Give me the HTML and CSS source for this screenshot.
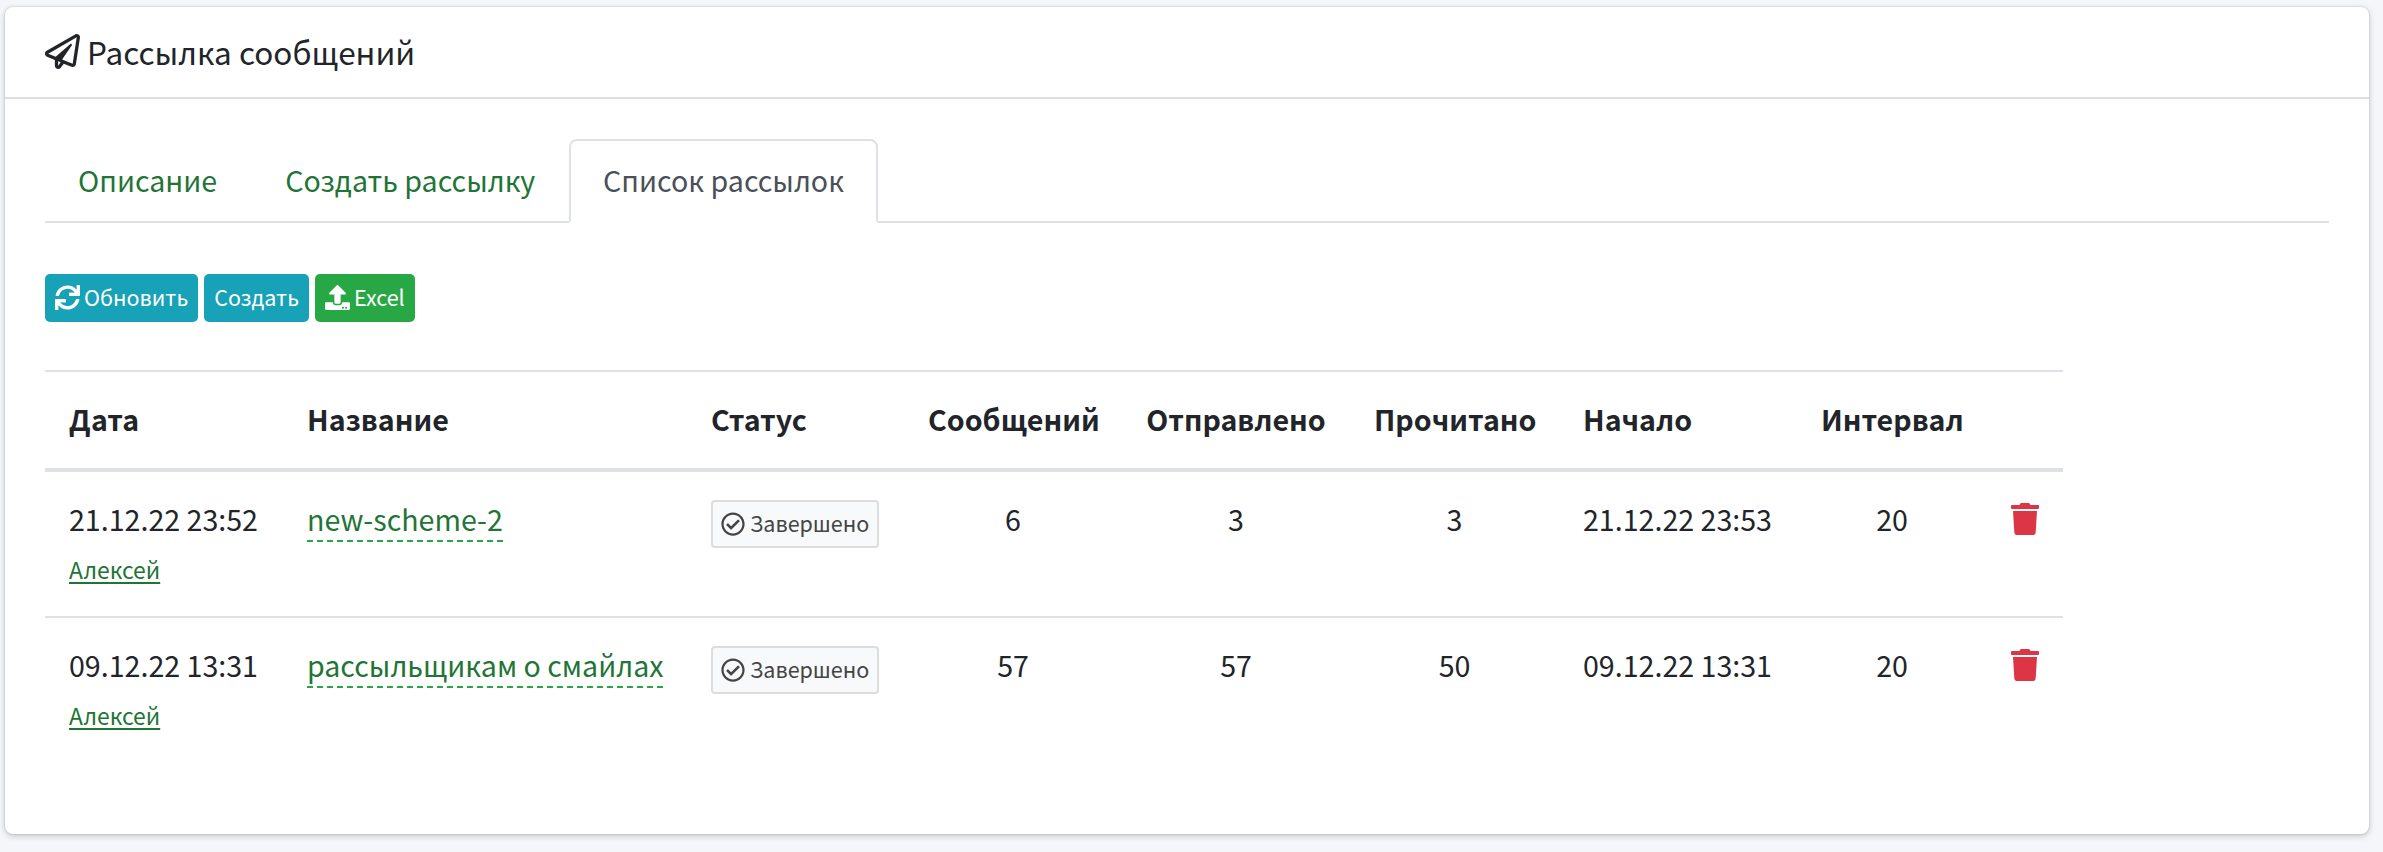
FILE: index.html
```
<!DOCTYPE html>
<html lang="ru">
<head>
    <meta charset="UTF-8">
    <meta name="viewport" content="width=device-width, initial-scale=1.0">
    <title>Рассылка сообщений</title>
    <link rel="stylesheet" href="styles.css">
</head>
<body>
    <!-- Shared icons -->
    <svg class="sprite">
        <symbol id="check" viewBox="0 0 512 512"><path fill="currentColor" d="M256 8C119.033 8 8 119.033 8 256s111.033 248 248 248 248-111.033 248-248S392.967 8 256 8zm0 48c110.532 0 200 89.451 200 200 0 110.532-89.451 200-200 200-110.532 0-200-89.451-200-200 0-110.532 89.451-200 200-200m140.204 130.267l-22.536-22.718c-4.667-4.705-12.265-4.736-16.970-.068L215.346 303.697l-59.792-60.277c-4.667-4.705-12.265-4.736-16.970-.069l-22.719 22.536c-4.705 4.667-4.736 12.265-.068 16.971l90.781 91.516c4.667 4.705 12.265 4.736 16.970.068l172.589-171.204c4.704-4.668 4.734-12.266.067-16.971z"/></symbol>
        <symbol id="trash" viewBox="0 0 448 512"><path fill="currentColor" d="M432 32H312l-9.400-18.700A24 24 0 0 0 281.100 0H166.800a23.720 23.720 0 0 0-21.400 13.300L136 32H16A16 16 0 0 0 0 48v32a16 16 0 0 0 16 16h416a16 16 0 0 0 16-16V48a16 16 0 0 0-16-16zM32 128l21.200 339a48 48 0 0 0 47.900 45h245.800a48 48 0 0 0 47.900-45L416 128z"/></symbol>
    </svg>

    <div class="card">
        <div class="card-header">
            <svg class="icon-plane" viewBox="0 0 512 512"><path fill="currentColor" d="M440 6.500L24 246.400c-34.400 19.900-31.100 70.800 5.700 85.900L144 379.600V464c0 46.400 59.200 65.500 86.600 28.600l43.800-59.100 111.900 46.200c5.900 2.400 12.100 3.600 18.300 3.600 8.200 0 16.300-2.100 23.600-6.200 12.800-7.200 21.600-20 23.900-34.500l59.400-387.200c6.100-40.100-36.900-68.800-71.500-48.900zM192 464v-64.600l36.600 15.100L192 464zm212.600-28.700l-153.800-63.500L391 169.500c10.700-15.500-9.500-33.500-23.700-21.200L155.800 332.600 48 288 464 48l-59.400 387.300z"/></svg>
            <h3 class="card-title">Рассылка сообщений</h3>
        </div>

        <div class="card-body">
            <ul class="nav-tabs">
                <li class="nav-link">Описание</li>
                <li class="nav-link">Создать рассылку</li>
                <li class="nav-link active">Список рассылок</li>
            </ul>

            <div class="buttons">
                <button class="btn btn-info">
                    <svg class="icon-btn" viewBox="0 0 512 512"><path fill="currentColor" d="M440.650 12.570l4 82.770A247.160 247.160 0 0 0 255.830 8C134.730 8 33.910 94.920 12.290 209.820A12 12 0 0 0 24.090 224h49.050a12 12 0 0 0 11.670-9.260 175.910 175.910 0 0 1 317-56.940l-101.460-4.860a12 12 0 0 0-12.570 12v47.410a12 12 0 0 0 12 12H500a12 12 0 0 0 12-12V12a12 12 0 0 0-12-12h-47.370a12 12 0 0 0-11.980 12.570zM255.830 432a175.610 175.610 0 0 1-146-77.800l101.800 4.870a12 12 0 0 0 12.570-12v-47.400a12 12 0 0 0-12-12H12a12 12 0 0 0-12 12V500a12 12 0 0 0 12 12h47.350a12 12 0 0 0 12-12.600l-4.150-82.570A247.170 247.170 0 0 0 255.830 504c121.110 0 221.930-86.920 243.550-201.820a12 12 0 0 0-11.800-14.180h-49.050a12 12 0 0 0-11.670 9.260A175.860 175.860 0 0 1 255.830 432z"/></svg>
                    <span>Обновить</span>
                </button>
                <button class="btn btn-info"><span>Создать</span></button>
                <button class="btn btn-success">
                    <svg class="icon-btn" viewBox="0 0 512 512"><path fill="currentColor" d="M296 384h-80c-13.300 0-24-10.700-24-24V192h-87.700c-17.800 0-26.700-21.500-14.100-34.100L242.300 5.700c7.500-7.500 19.800-7.500 27.300 0l152.200 152.200c12.600 12.600 3.700 34.100-14.100 34.100H320v168c0 13.300-10.700 24-24 24zm216-8v112c0 13.300-10.700 24-24 24H24c-13.300 0-24-10.700-24-24V376c0-13.300 10.700-24 24-24h136v8c0 30.900 25.100 56 56 56h80c30.900 0 56-25.100 56-56v-8h136c13.300 0 24 10.700 24 24zm-124 88c0-11-9-20-20-20s-20 9-20 20 9 20 20 20 20-9 20-20zm64 0c0-11-9-20-20-20s-20 9-20 20 9 20 20 20 20-9 20-20z"/></svg>
                    <span>Excel</span>
                </button>
            </div>

            <table class="table">
                <colgroup>
                    <col class="col-date">
                    <col class="col-name">
                    <col class="col-status">
                    <col class="col-total">
                    <col class="col-sent">
                    <col class="col-read">
                    <col class="col-start">
                    <col class="col-interval">
                    <col class="col-delete">
                </colgroup>
                <thead>
                    <tr>
                        <th>Дата</th>
                        <th>Название</th>
                        <th>Статус</th>
                        <th class="center">Сообщений</th>
                        <th class="center">Отправлено</th>
                        <th class="center">Прочитано</th>
                        <th>Начало</th>
                        <th class="center">Интервал</th>
                        <th></th>
                    </tr>
                </thead>
                <tbody>
                    <tr>
                        <td>21.12.22 23:52<br><a class="author">Алексей</a></td>
                        <td><a class="name">new-scheme-2</a></td>
                        <td><div class="status"><svg class="icon-check"><use href="#check"/></svg><span>Завершено</span></div></td>
                        <td class="center">6</td>
                        <td class="center">3</td>
                        <td class="center">3</td>
                        <td>21.12.22 23:53</td>
                        <td class="center">20</td>
                        <td><svg class="icon-trash"><use href="#trash"/></svg></td>
                    </tr>
                    <tr>
                        <td>09.12.22 13:31<br><a class="author">Алексей</a></td>
                        <td><a class="name">рассыльщикам о смайлах</a></td>
                        <td><div class="status"><svg class="icon-check"><use href="#check"/></svg><span>Завершено</span></div></td>
                        <td class="center">57</td>
                        <td class="center">57</td>
                        <td class="center">50</td>
                        <td>09.12.22 13:31</td>
                        <td class="center">20</td>
                        <td><svg class="icon-trash"><use href="#trash"/></svg></td>
                    </tr>
                </tbody>
            </table>
        </div>
    </div>
</body>
</html>
```
FILE: styles.css
```
* {
    box-sizing: border-box;
}

body {
    margin: 0;
    height: 852px;
    padding: 7px 14px 18px 5px;
    overflow: hidden;
    background-color: #f4f6f9;
    color: #212529;
    font-family: "Noto Sans CJK SC", "Noto Sans", sans-serif;
    font-size: 28.6px;
    line-height: 48px;
}

.sprite {
    display: none;
}

svg {
    display: block;
    flex: none;
}

.card {
    height: 827px;
    background-color: #fff;
    border-radius: 8px;
    box-shadow: 0 0 2px rgba(0, 0, 0, 0.2), 0 2px 6px rgba(0, 0, 0, 0.2);
}

.card-header {
    display: flex;
    align-items: center;
    gap: 7px;
    height: 92px;
    padding: 0 40px 1px;
    border-bottom: 2px solid #dfdfdf;
}

.card-title {
    margin: 0;
    padding-bottom: 2px;
    font-size: 31.5px;
    font-weight: 400;
}

.icon-plane {
    width: 35px;
    height: 35px;
}

.card-body {
    padding: 40px;
}

/* Tabs */
.nav-tabs {
    display: flex;
    height: 84px;
    margin: 0;
    padding: 0;
    list-style: none;
    border-bottom: 2px solid #dee2e6;
}

.nav-link {
    height: 84px;
    padding: 15px 32px;
    border: 2px solid transparent;
    border-radius: 8px 8px 0 0;
    color: #1e7536;
}

.nav-link:first-child {
    padding-left: 31px;
}

.nav-link.active {
    color: #495057;
    background-color: #fff;
    border-color: #dee2e6 #dee2e6 #fff;
}

/* Buttons */
.buttons {
    display: flex;
    gap: 6px;
    margin: 51px 0 48px;
}

.btn {
    display: flex;
    align-items: center;
    gap: 4px;
    height: 48px;
    padding: 0 10px;
    border: none;
    border-radius: 5px;
    color: #fff;
    font-family: inherit;
    font-size: 21.5px;
    line-height: 44px;
}

.btn span,
.status span {
    padding-bottom: 2px;
}

.btn-info {
    background-color: #17a2b8;
}

.btn-success {
    background-color: #28a745;
}

.icon-btn {
    width: 25px;
    height: 25px;
    margin-bottom: 1px;
}

/* Table */
.table {
    width: 2018px;
    table-layout: fixed;
    border-spacing: 0;
}

.table th,
.table td {
    height: 144px;
    padding: 23px 24px 25px;
    text-align: left;
    vertical-align: top;
    white-space: nowrap;
}

.table th {
    height: 102px;
    border-top: 2px solid #dee2e6;
    border-bottom: 4px solid #dee2e6;
}

.table tr + tr td {
    border-top: 2px solid #dee2e6;
}

.table .center {
    text-align: center;
}

.col-date { width: 238px; }
.col-name { width: 404px; }
.col-status { width: 217px; }
.col-total { width: 218px; }
.col-sent { width: 228px; }
.col-read { width: 209px; }
.col-start { width: 238px; }
.col-interval { width: 190px; }
.col-delete { width: 76px; }

/* inline-block with a fixed line keeps the row height exact */
.author {
    display: inline-block;
    height: 48px;
    padding-top: 2px;
    vertical-align: top;
    color: #1e7536;
    font-size: 22.9px;
    text-decoration: underline;
    text-decoration-thickness: 2px;
    text-underline-offset: 3px;
}

.name {
    display: inline-block;
    height: 47px;
    color: #1e7536;
    border-bottom: 2px dashed #28a745;
}

.status {
    display: flex;
    align-items: center;
    gap: 5px;
    width: 168px;
    height: 48px;
    margin-top: 5px;
    padding: 0 8px;
    border: 2px solid #ddd;
    border-radius: 4px;
    background-color: #f8f9fa;
    color: #444;
    font-size: 21.5px;
    line-height: 44px;
}

.icon-check {
    width: 24px;
    height: 24px;
    margin-bottom: 1px;
}

.icon-trash {
    width: 28px;
    height: 32px;
    margin-top: 8px;
    color: #dc3545;
}
```
